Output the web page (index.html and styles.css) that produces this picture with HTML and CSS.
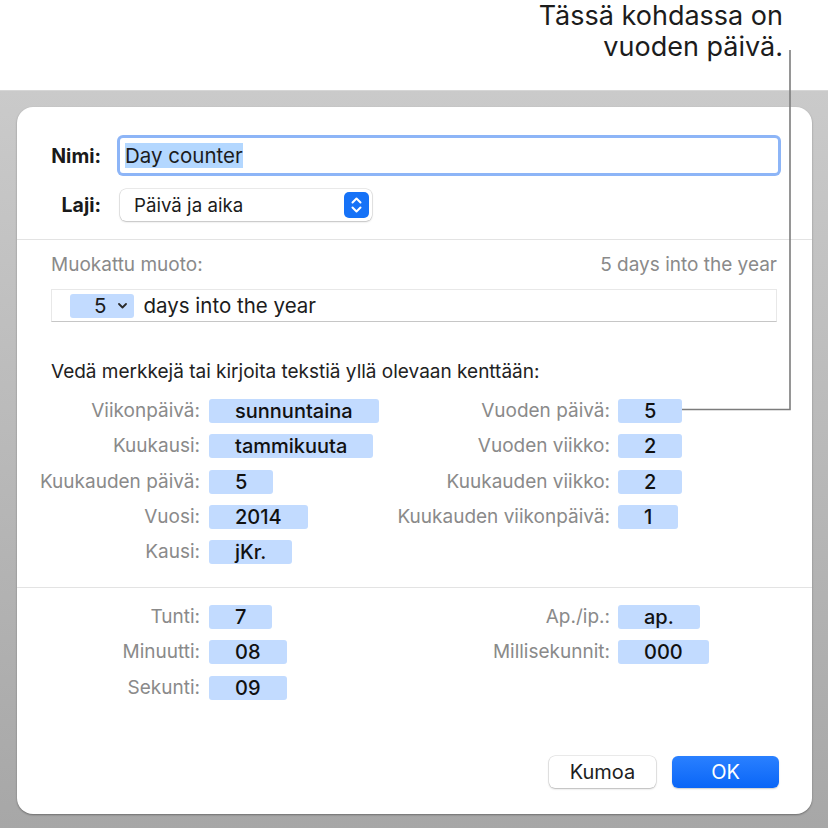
FILE: index.html
```html
<!DOCTYPE html>
<html lang="fi">
<head>
<meta charset="utf-8">
<title>Day counter</title>
<link rel="stylesheet" href="styles.css">
</head>
<body>
<div class="callout"><p class="callout-text">Tässä kohdassa on<br>vuoden päivä.</p></div>
<div class="backdrop">
  <div class="dialog">
    <div class="top">
      <label class="lbl-bold">Nimi:</label>
      <div class="textfield"><span class="sel">Day counter</span></div>
      <label class="lbl-bold">Laji:</label>
      <div class="popup"><span>Päivä ja aika</span><span class="stepper"><svg width="25" height="26" viewBox="0 0 25 26"><rect x="0" y="0" width="25" height="26" rx="5" fill="#1672f7"/><path d="M8.5 10.5 L12.5 6.5 L16.5 10.5" fill="none" stroke="#fff" stroke-width="2" stroke-linecap="round" stroke-linejoin="round"/><path d="M8.5 15.5 L12.5 19.5 L16.5 15.5" fill="none" stroke="#fff" stroke-width="2" stroke-linecap="round" stroke-linejoin="round"/></svg></span></div>
    </div>
    <div class="format">
      <div class="format-head"><span>Muokattu muoto:</span><span>5 days into the year</span></div>
      <div class="format-field"><span class="token-menu"><span>5</span><svg width="9" height="6" viewBox="0 0 9 6"><path d="M1 1 L4.5 4.5 L8 1" fill="none" stroke="#2a2a2a" stroke-width="1.8" stroke-linecap="round" stroke-linejoin="round"/></svg></span><span>days into the year</span></div>
      <p class="hint">Vedä merkkejä tai kirjoita tekstiä yllä olevaan kenttään:</p>
      <div class="elements">
        <span class="lab">Viikonpäivä:</span><span class="token">sunnuntaina</span>
        <span class="lab">Vuoden päivä:</span><span class="token r">5</span>
        <span class="lab">Kuukausi:</span><span class="token">tammikuuta</span>
        <span class="lab">Vuoden viikko:</span><span class="token r">2</span>
        <span class="lab">Kuukauden päivä:</span><span class="token">5</span>
        <span class="lab">Kuukauden viikko:</span><span class="token r">2</span>
        <span class="lab">Vuosi:</span><span class="token">2014</span>
        <span class="lab">Kuukauden viikonpäivä:</span><span class="token r">1</span>
        <span class="lab">Kausi:</span><span class="token">jKr.</span>
        <span></span><span></span>
      </div>
    </div>
    <div class="time">
      <div class="elements">
        <span class="lab">Tunti:</span><span class="token">7</span>
        <span class="lab">Ap./ip.:</span><span class="token r">ap.</span>
        <span class="lab">Minuutti:</span><span class="token">08</span>
        <span class="lab">Millisekunnit:</span><span class="token r">000</span>
        <span class="lab">Sekunti:</span><span class="token">09</span>
        <span></span><span></span>
      </div>
      <div class="buttons">
        <button class="btn btn-cancel">Kumoa</button>
        <button class="btn btn-ok">OK</button>
      </div>
    </div>
  </div>
</div>
<svg class="leader" width="828" height="828" viewBox="0 0 828 828"><polyline points="790,50 790,409.5 682,409.5" fill="none" stroke="#7c7c7c" stroke-width="1.6"/></svg>
</body>
</html>
```
FILE: styles.css
```css
html, body {
  margin: 0;
  padding: 0;
}
body {
  width: 828px;
  height: 828px;
  overflow: hidden;
  background: #fff;
  font-family: Inter, "Noto Sans", "Liberation Sans", sans-serif;
  color: #1c1c1c;
  position: relative;
}
.callout {
  height: 90px;
  box-sizing: border-box;
  padding: 0 45px 0 0;
  text-align: right;
}
.callout-text {
  margin: 0;
  font-size: 27px;
  line-height: 31px;
  color: #1c1c1c;
}
.backdrop {
  height: 738px;
  box-sizing: border-box;
  padding: 16px 16px 0 17px;
  background: linear-gradient(#cacaca, #a7a7a7);
  border-top: 1px solid #d6d6d6;
}
.dialog {
  height: 707px;
  box-sizing: border-box;
  background: #fff;
  border-radius: 16px;
  box-shadow: 0 1px 2px rgba(0, 0, 0, 0.35);
  display: flex;
  flex-direction: column;
}
.top {
  display: grid;
  grid-template-columns: 84px 1fr;
  column-gap: 19px;
  row-gap: 16px;
  align-items: center;
  padding: 31px 34px 18px 0;
  border-bottom: 1px solid #e3e3e3;
}
.lbl-bold {
  font-weight: 700;
  font-size: 19.5px;
  text-align: right;
  color: #1a1a1a;
}
.textfield {
  height: 35px;
  box-sizing: border-box;
  border-radius: 3px;
  box-shadow: 0 0 0 3px #8db5f7;
  display: flex;
  align-items: center;
  padding-left: 5px;
  font-size: 20.5px;
}
.sel {
  background: #b3d7ff;
  line-height: 25px;
}
.popup {
  justify-self: start;
  width: 252px;
  height: 32px;
  box-sizing: border-box;
  border-radius: 6px;
  box-shadow: 0 0 0 0.5px rgba(0, 0, 0, 0.16), 0 1px 2px rgba(0, 0, 0, 0.18);
  display: flex;
  align-items: center;
  justify-content: space-between;
  padding: 0 3px 0 14px;
  font-size: 18.7px;
}
.stepper {
  display: flex;
}
.format {
  padding: 15px 35px 23px 34px;
  border-bottom: 1px solid #e3e3e3;
}
.format-head {
  display: flex;
  justify-content: space-between;
  line-height: 20px;
  font-size: 19px;
  color: #8a8a8a;
}
.format-field {
  margin-top: 14px;
  height: 33px;
  box-sizing: border-box;
  border: 1px solid #e8e8e8;
  border-bottom-color: #c6c6c6;
  display: flex;
  align-items: center;
  gap: 9px;
  padding-left: 18px;
  font-size: 20.5px;
  color: #1c1c1c;
}
.token-menu {
  display: flex;
  align-items: center;
  gap: 12px;
  height: 24px;
  padding: 0 7px 0 24px;
  background: #c2dbff;
  border-radius: 3px;
}
.hint {
  margin: 40px 0 17px;
  line-height: 20px;
  font-size: 19px;
  color: #222;
}
.elements {
  display: grid;
  margin-left: -30px;
  grid-template-columns: 179px 181px 229px 1fr;
  grid-auto-rows: 24px;
  row-gap: 11.3px;
}
.lab {
  text-align: right;
  white-space: nowrap;
  line-height: 24px;
  font-size: 19px;
  color: #8a8a8a;
}
.token {
  justify-self: start;
  margin-left: 9px;
  height: 24px;
  line-height: 24px;
  padding: 0 26px;
  background: #c2dbff;
  border-radius: 3px;
  font-size: 20px;
  font-weight: 500;
  color: #111;
  white-space: nowrap;
}
.token.r {
  margin-left: 8px;
}
.time {
  flex: 1;
  display: flex;
  flex-direction: column;
  padding: 17px 33px 26px 34px;
}
.buttons {
  margin-top: auto;
  display: flex;
  justify-content: flex-end;
  gap: 16px;
}
.btn {
  width: 107px;
  height: 32px;
  border: none;
  border-radius: 6px;
  font-family: inherit;
  font-size: 20px;
  padding: 0;
}
.btn-cancel {
  background: #fff;
  color: #1e1e1e;
  box-shadow: 0 0 0 0.5px rgba(0, 0, 0, 0.15), 0 1px 2px rgba(0, 0, 0, 0.22);
}
.btn-ok {
  background: linear-gradient(#2a80ff, #0a66f7);
  color: #fff;
  box-shadow: 0 1px 1.5px rgba(0, 0, 0, 0.2);
}
.leader {
  position: absolute;
  top: 0;
  left: 0;
  pointer-events: none;
}
```
